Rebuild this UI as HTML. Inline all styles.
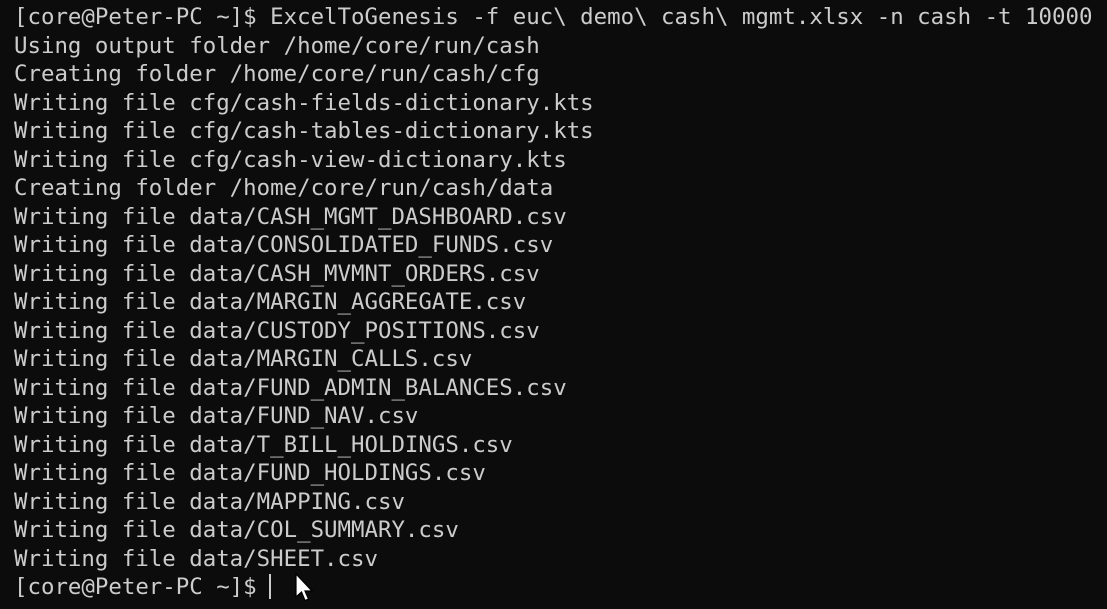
<!DOCTYPE html>
<html><head><meta charset="utf-8"><style>
html,body{margin:0;padding:0;background:#0c0c0c;width:1107px;height:609px;overflow:hidden}
pre{margin:0;position:absolute;left:14px;top:3px;font-family:"DejaVu Sans Mono","Liberation Mono",monospace;font-size:22.4px;line-height:28.5px;color:#cccccc;white-space:pre}
.cur{position:absolute;left:269px;top:574px;width:2px;height:25px;background:#cccccc}
svg{position:absolute;left:294px;top:573px}
</style></head><body>
<pre>[core@Peter-PC ~]$ ExcelToGenesis -f euc\ demo\ cash\ mgmt.xlsx -n cash -t 10000
Using output folder /home/core/run/cash
Creating folder /home/core/run/cash/cfg
Writing file cfg/cash-fields-dictionary.kts
Writing file cfg/cash-tables-dictionary.kts
Writing file cfg/cash-view-dictionary.kts
Creating folder /home/core/run/cash/data
Writing file data/CASH_MGMT_DASHBOARD.csv
Writing file data/CONSOLIDATED_FUNDS.csv
Writing file data/CASH_MVMNT_ORDERS.csv
Writing file data/MARGIN_AGGREGATE.csv
Writing file data/CUSTODY_POSITIONS.csv
Writing file data/MARGIN_CALLS.csv
Writing file data/FUND_ADMIN_BALANCES.csv
Writing file data/FUND_NAV.csv
Writing file data/T_BILL_HOLDINGS.csv
Writing file data/FUND_HOLDINGS.csv
Writing file data/MAPPING.csv
Writing file data/COL_SUMMARY.csv
Writing file data/SHEET.csv
[core@Peter-PC ~]$</pre>
<div class="cur"></div>
<svg width="22" height="30" viewBox="0 0 22 30"><path d="M2 1 L2 24 L7.5 19 L11 27.5 L14.5 26 L11 18 L18 18 Z" fill="#fff" stroke="#000" stroke-width="1.2"/></svg>
</body></html>
